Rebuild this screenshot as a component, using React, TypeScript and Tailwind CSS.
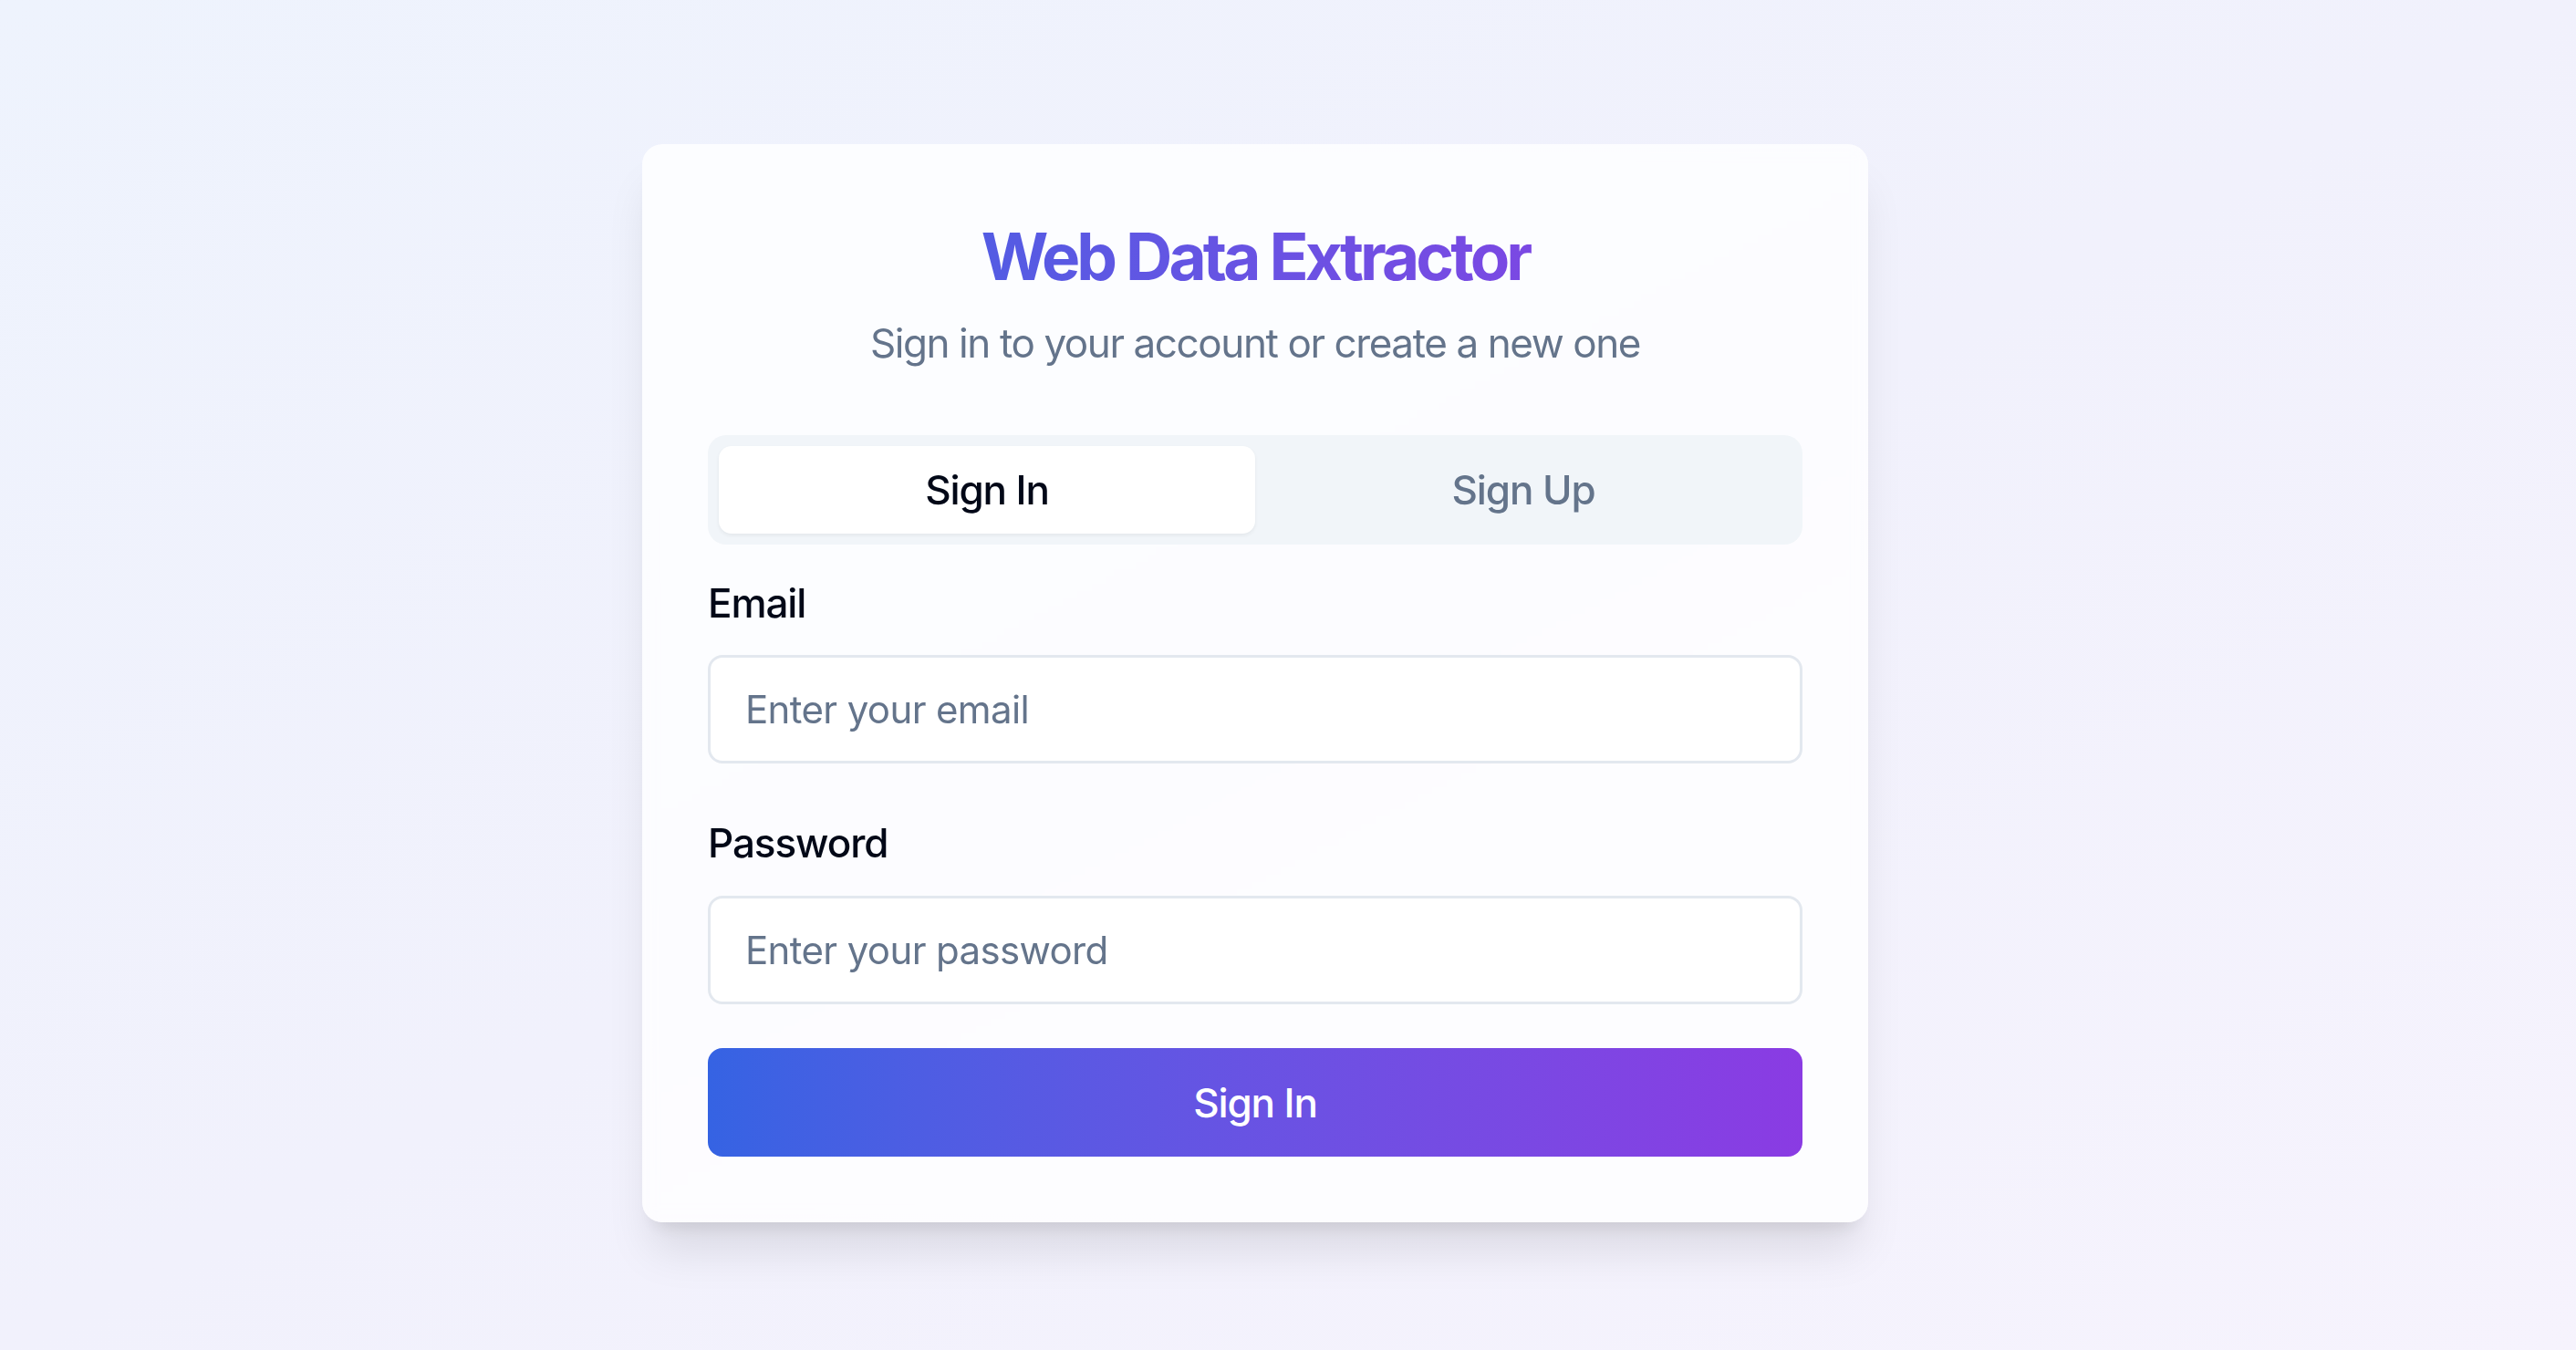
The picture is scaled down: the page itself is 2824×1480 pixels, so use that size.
import { useState } from "react";

export default function App() {
  const [tab, setTab] = useState<"signin" | "signup">("signin");

  return (
    <div
      className="min-h-screen w-full bg-gradient-to-br from-[#eef3fd] via-[#f1f1fc] to-[#f6f3fd] flex justify-center pr-[72px] pt-[158px]"
      style={{ fontFamily: "Inter, 'Noto Sans', sans-serif" }}
    >
      <div className="w-[1344px] h-fit bg-white/80 backdrop-blur rounded-[22px] shadow-[0_40px_50px_-10px_rgba(0,0,0,0.1),0_16px_20px_-12px_rgba(0,0,0,0.1)] px-[72px] pt-[83px] pb-[72px]">
        {/* Header */}
        <h1 className="text-center text-[71px] leading-[80px] font-bold tracking-[-0.055em] bg-gradient-to-r from-[#3563e3] to-[#8a3be3] bg-clip-text text-transparent">
          Web Data Extractor
        </h1>
        <p className="mt-[27px] text-center text-[44px] leading-[56px] tracking-[-0.032em] text-[#64748b]">
          Sign in to your account or create a new one
        </p>

        {/* Tabs */}
        <div className="mt-[73px] h-[120px] bg-[#f1f5f9] rounded-[20px] p-[12px] grid grid-cols-2">
          <button
            onClick={() => setTab("signin")}
            className={`rounded-[14px] text-[44px] font-medium tracking-[-0.025em] ${
              tab === "signin"
                ? "bg-white text-[#020817] shadow-[0_2px_4px_rgba(0,0,0,0.06)]"
                : "text-[#64748b]"
            }`}
          >
            Sign In
          </button>
          <button
            onClick={() => setTab("signup")}
            className={`rounded-[14px] text-[44px] font-medium tracking-[-0.025em] ${
              tab === "signup"
                ? "bg-white text-[#020817] shadow-[0_2px_4px_rgba(0,0,0,0.06)]"
                : "text-[#64748b]"
            }`}
          >
            Sign Up
          </button>
        </div>

        {/* Form */}
        <form className="mt-[36px]" onSubmit={(e) => e.preventDefault()}>
          <label className="block text-[44px] leading-[56px] font-medium tracking-[-0.025em] text-[#020817]">
            Email
          </label>
          <input
            type="email"
            placeholder="Enter your email"
            className="mt-[29px] block w-full h-[119px] rounded-[16px] border-[3px] border-[#e3e8ef] bg-white px-[38px] text-[42px] tracking-[-0.015em] text-[#020817] placeholder:text-[#64748b] outline-none"
          />

          <label className="mt-[59px] block text-[44px] leading-[56px] font-medium tracking-[-0.025em] text-[#020817]">
            Password
          </label>
          <input
            type="password"
            placeholder="Enter your password"
            className="mt-[30px] block w-full h-[119px] rounded-[16px] border-[3px] border-[#e3e8ef] bg-white px-[38px] text-[42px] tracking-[-0.015em] text-[#020817] placeholder:text-[#64748b] outline-none"
          />

          <button
            type="submit"
            className="mt-[48px] w-full h-[119px] rounded-[16px] bg-gradient-to-r from-[#3563e3] to-[#8a3be3] text-white text-[44px] font-medium tracking-[-0.025em]"
          >
            {tab === "signin" ? "Sign In" : "Sign Up"}
          </button>
        </form>
      </div>
    </div>
  );
}
